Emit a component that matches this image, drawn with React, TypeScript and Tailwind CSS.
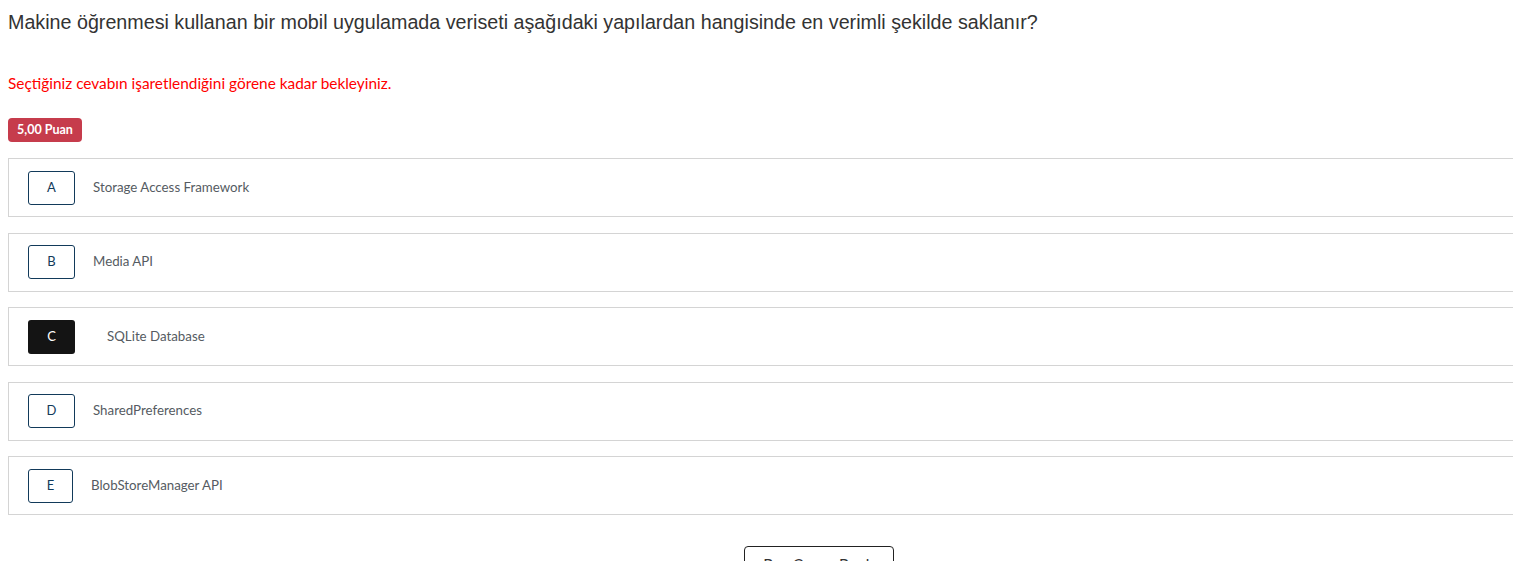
import React from 'react';

type Option = { key: string; label: string; selected?: boolean; box: string; pad: string };

const options: Option[] = [
  { key: 'A', label: 'Storage Access Framework', box: 'w-[47px]', pad: 'ml-[18px]' },
  { key: 'B', label: 'Media API', box: 'w-[47px]', pad: 'ml-[18px]' },
  { key: 'C', label: 'SQLite Database', selected: true, box: 'w-[47px]', pad: 'ml-[32px]' },
  { key: 'D', label: 'SharedPreferences', box: 'w-[47px]', pad: 'ml-[18px]' },
  { key: 'E', label: 'BlobStoreManager API', box: 'w-[45px]', pad: 'ml-[18px]' },
];

const App: React.FC = () => {
  return (
    <div className="w-[1513px] h-[561px] overflow-hidden bg-white">
      <div className="px-2 pt-[7px]">
        <h1 className="text-[19.7px] leading-[30px] text-[#333] font-['Liberation_Sans',Arial,sans-serif]">
          Makine öğrenmesi kullanan bir mobil uygulamada veriseti aşağıdaki yapılardan hangisinde en verimli şekilde saklanır?
        </h1>

        <p className="mt-[35px] text-[15.4px] leading-[22px] text-[#ff0000] font-['Lato',sans-serif]">
          Seçtiğiniz cevabın işaretlendiğini görene kadar bekleyiniz.
        </p>

        <div className="mt-[24px] inline-flex items-center h-6 px-[9px] rounded bg-[#c63c4c] text-white text-[12.5px] font-bold font-['Lato',sans-serif]">
          5,00 Puan
        </div>

        <div className="mt-4 w-[1540px] flex flex-col gap-[15.5px] font-['Lato',sans-serif]">
          {options.map(o => (
            <div key={o.key} className="h-[59px] border border-[#d4d4d4] flex items-center pl-[19px]">
              <div
                className={
                  o.selected
                    ? `${o.box} h-[34px] rounded-[3px] bg-[#141414] text-white text-[13px] flex items-center justify-center`
                    : `${o.box} h-[34px] rounded-[3px] border border-[#123a5a] text-[#123a5a] text-[13px] flex items-center justify-center`
                }
              >
                {o.key}
              </div>
              <span className={`${o.pad} text-[13.3px] text-[#555b62]`}>{o.label}</span>
            </div>
          ))}
        </div>

        <div className="mt-[31px] flex justify-center">
          <button className="ml-[124px] w-[150px] h-[38px] rounded border border-[#222] text-[15.5px] text-[#333] font-['Lato',sans-serif]">
            Boş Cevap Bırak
          </button>
        </div>
      </div>
    </div>
  );
};

export default App;
